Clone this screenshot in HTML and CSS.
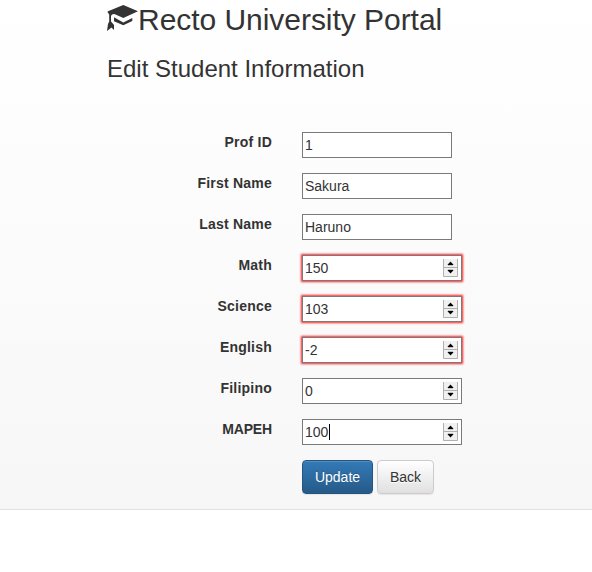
FILE: index.html
```html
<!DOCTYPE html>
<html lang="en">
<head>
<meta charset="utf-8">
<title>Recto University Portal</title>
<link rel="stylesheet" href="styles.css">
</head>
<body>
<svg class="defs" width="0" height="0" aria-hidden="true">
  <symbol id="spin" viewBox="0 0 15 19">
    <rect y="1" width="15" height="18" fill="#f0f0f0"/>
    <path d="M.5 1v17.500h14V1M.5 9.500h14" fill="none" stroke="#b0b0b0"/>
    <path d="M7 4h1v1h1v1h1v1H5V6h1V5h1zM5 12h5v1H9v1H8v1H7v-1H6v-1H5z" fill="#000" stroke="#000" stroke-width=".4"/>
  </symbol>
</svg>
<main class="panel">
  <h1 class="title"><svg class="cap" viewBox="0 0 31 27" aria-hidden="true"><path d="M16.300 0L31 6.300L16.300 13L8.500 9.600L7 9L5 9.500L4 11V16.500L7 20V25L4.500 22.500L0 26L1 19L2.200 16.500V9.500L0.500 7L1 6.300Z"/><path d="M7 12.300L16.300 17.500L25.300 13V16L16.300 20.300L7 16.300Z"/></svg>Recto University Portal</h1>
  <h2 class="subtitle">Edit Student Information</h2>
  <form class="form">
    <div class="row"><label class="label" for="prof">Prof ID</label><div class="field"><input class="input" id="prof" value="1"></div></div>
    <div class="row"><label class="label" for="first">First Name</label><div class="field"><input class="input" id="first" value="Sakura"></div></div>
    <div class="row"><label class="label" for="last">Last Name</label><div class="field"><input class="input" id="last" value="Haruno"></div></div>
    <div class="row"><label class="label" for="math">Math</label><div class="field number invalid"><input class="input" id="math" value="150"><svg class="spin"><use href="#spin"/></svg></div></div>
    <div class="row"><label class="label" for="science">Science</label><div class="field number invalid"><input class="input" id="science" value="103"><svg class="spin"><use href="#spin"/></svg></div></div>
    <div class="row"><label class="label" for="english">English</label><div class="field number invalid"><input class="input" id="english" value="-2"><svg class="spin"><use href="#spin"/></svg></div></div>
    <div class="row"><label class="label" for="filipino">Filipino</label><div class="field number"><input class="input" id="filipino" value="0"><svg class="spin"><use href="#spin"/></svg></div></div>
    <div class="row"><label class="label caps" for="mapeh">MAPEH</label><div class="field number"><input class="input" id="mapeh" value="100"><span class="caret"></span><svg class="spin"><use href="#spin"/></svg></div></div>
    <div class="actions"><button class="button primary" type="button">Update</button><button class="button" type="button">Back</button></div>
  </form>
</main>
</body>
</html>
```
FILE: styles.css
```css
* { box-sizing: border-box; }
body {
  margin: 0;
  background: #fff;
  color: #333;
  font: 14px/20px "Liberation Sans", Arial, sans-serif;
}
.defs { display: block; }
.panel {
  height: 510px;
  padding: 3px 0 0 107px;
  background: linear-gradient(#fff, #f7f7f7);
  border-bottom: 1px solid #e2e2e2;
  box-shadow: 0 1px 6px rgba(0, 0, 0, .08);
}
.title {
  display: flex;
  margin: 0;
  font-size: 30px;
  font-weight: 400;
  line-height: 33px;
  letter-spacing: -.04px;
  white-space: nowrap;
}
.cap {
  flex: none;
  width: 31px;
  height: 27px;
  margin-top: 2px;
  fill: #333;
}
.subtitle {
  margin: 20px 0 0;
  font-size: 24px;
  font-weight: 400;
  line-height: 26px;
}
.form { margin-top: 50px; }
.row { display: flex; height: 41px; }
.label {
  width: 165px;
  margin-right: 30px;
  font-weight: 700;
  letter-spacing: .22px;
  text-align: right;
}
.caps { letter-spacing: -.15px; }
.field { position: relative; width: 150px; height: 26px; }
.number { width: 160px; }
.input {
  display: block;
  width: 100%;
  height: 26px;
  margin: 0;
  padding: 2px;
  border: 1px solid #7a7a7a;
  border-radius: 0;
  outline: 0;
  background: #fff;
  color: #333;
  font: inherit;
}
.invalid .input { box-shadow: 0 0 2px 1px #ff2020; }
.spin {
  position: absolute;
  top: 3px;
  right: 4px;
  width: 15px;
  height: 19px;
}
.caret {
  position: absolute;
  top: 5px;
  left: 27px;
  width: 1px;
  height: 16px;
  background: #000;
}
.actions { display: flex; gap: 4px; padding-left: 195px; }
.button {
  width: 57px;
  height: 34px;
  padding: 0;
  border: 1px solid #ccc;
  border-radius: 4px;
  background: linear-gradient(#fff, #e0e0e0);
  box-shadow: inset 0 1px 0 rgba(255, 255, 255, .15), 0 1px 1px rgba(0, 0, 0, .075);
  color: #333;
  font: inherit;
  text-shadow: 0 1px 0 #fff;
}
.primary {
  width: 71px;
  border-color: #245580;
  background: linear-gradient(#337ab7, #265a88);
  color: #fff;
  text-shadow: 0 -1px 0 rgba(0, 0, 0, .2);
}
```
